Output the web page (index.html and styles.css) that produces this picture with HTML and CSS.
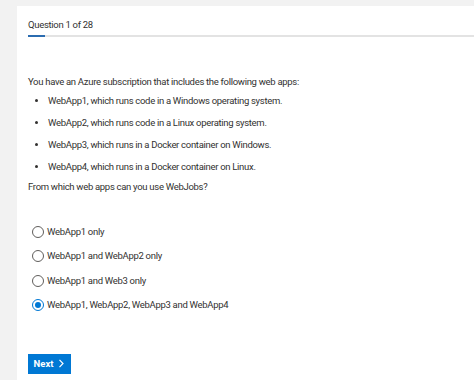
FILE: index.html
```html
<!DOCTYPE html>
<html lang="en">
<head>
  <meta charset="UTF-8">
  <title>Question 1 of 28</title>
  <link rel="stylesheet" href="styles.css">
</head>
<body>

<div class="panel">
  <div class="encabezado">
    <span>Question 1 of 28</span>
  </div>
  <div class="progreso"><div class="barra"></div></div>

  <div class="pregunta">
    <p>You have an Azure subscription that includes the following web apps:</p>
    <ul>
      <li>WebApp1, which runs code in a Windows operating system.</li>
      <li>WebApp2, which runs code in a Linux operating system.</li>
      <li>WebApp3, which runs in a Docker container on Windows.</li>
      <li>WebApp4, which runs in a Docker container on Linux.</li>
    </ul>
    <p>From which web apps can you use WebJobs?</p>
  </div>

  <div class="opciones">
    <label class="opcion"><span class="radio"></span>WebApp1 only</label>
    <label class="opcion"><span class="radio"></span>WebApp1 and WebApp2 only</label>
    <label class="opcion"><span class="radio"></span>WebApp1 and Web3 only</label>
    <label class="opcion"><span class="radio marcado"></span>WebApp1, WebApp2, WebApp3 and WebApp4</label>
  </div>

  <button class="siguiente">Next
    <svg width="7" height="9" viewBox="0 0 7 9"><path d="M1.5 0.8 L5 4.5 L1.5 8.2" fill="none" stroke="white" stroke-width="1.2"/></svg>
  </button>
</div>

</body>
</html>
```

FILE: styles.css
```css
body {
  margin: 0;
  background-color: #f2f2f2;
  font-family: 'Roboto', sans-serif;
  color: #323130;
  font-size: 9.5px;
  letter-spacing: -0.3px;
}

.panel {
  margin: 6px 0 0 17px;
  background-color: white;
  min-height: 374px;
  padding: 0 0 0 11px;
  box-sizing: border-box;
}

.encabezado {
  padding-top: 12px;
  height: 17px;
  line-height: 14px;
}

.progreso {
  height: 2px;
  background-color: #e3e3e3;
}

.progreso .barra {
  width: 17px;
  height: 2px;
  background-color: #2b6cb0;
}

.pregunta {
  padding-top: 38px;
}

.pregunta p {
  margin: 0;
  line-height: 14px;
}

.pregunta ul {
  margin: 5px 0 6px 0;
  padding-left: 20px;
}

.pregunta li {
  line-height: 14px;
  margin-bottom: 8px;
}

.pregunta li:last-child {
  margin-bottom: 0;
}

.pregunta li::marker {
  font-size: 10px;
}

.opciones {
  margin-top: 31px;
  display: flex;
  flex-direction: column;
  gap: 10.3px;
}

.opcion {
  display: flex;
  align-items: center;
  gap: 3px;
  padding-left: 4px;
  line-height: 14px;
}

.radio {
  width: 10px;
  height: 10px;
  border: 1px solid #605e5c;
  border-radius: 50%;
  position: relative;
}

.radio.marcado {
  border-color: #0078d4;
}

.radio.marcado::after {
  content: '';
  position: absolute;
  left: 2px;
  top: 2px;
  width: 6px;
  height: 6px;
  border-radius: 50%;
  background-color: #0078d4;
}

.siguiente {
  margin-top: 42px;
  background-color: #0078d4;
  color: white;
  border: none;
  font-family: 'Roboto', sans-serif;
  font-weight: 700;
  font-size: 9.5px;
  height: 20px;
  width: 43px;
  padding: 0;
  display: flex;
  align-items: center;
  justify-content: center;
  gap: 5px;
}
```
